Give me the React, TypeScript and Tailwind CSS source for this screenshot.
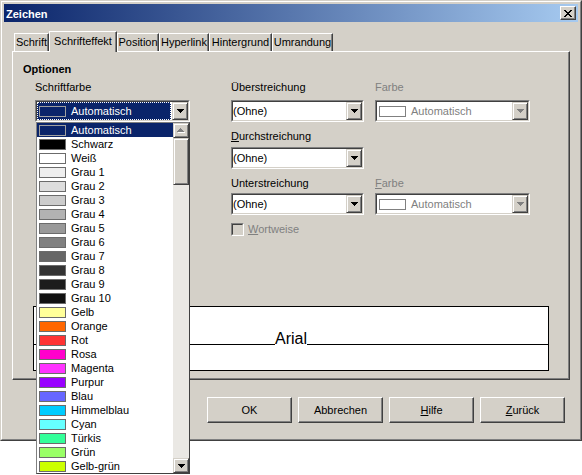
import React from "react";

const PALETTE: [string, string | null][] = [
  ["Automatisch", null],
  ["Schwarz", "#000000"],
  ["Weiß", "#ffffff"],
  ["Grau 1", "#eeeeee"],
  ["Grau 2", "#dddddd"],
  ["Grau 3", "#cccccc"],
  ["Grau 4", "#b2b2b2"],
  ["Grau 5", "#999999"],
  ["Grau 6", "#808080"],
  ["Grau 7", "#666666"],
  ["Grau 8", "#333333"],
  ["Grau 9", "#1c1c1c"],
  ["Grau 10", "#111111"],
  ["Gelb", "#ffff99"],
  ["Orange", "#ff6600"],
  ["Rot", "#ff3333"],
  ["Rosa", "#ff00cc"],
  ["Magenta", "#ff33ff"],
  ["Purpur", "#9900ff"],
  ["Blau", "#6666ff"],
  ["Himmelblau", "#00ccff"],
  ["Cyan", "#66ffff"],
  ["Türkis", "#33ff99"],
  ["Grün", "#99ff66"],
  ["Gelb-grün", "#ccff00"],
];

function ArrowDown({ color = "#000" }: { color?: string }) {
  return (
    <svg width="7" height="4" viewBox="0 0 7 4" shapeRendering="crispEdges">
      <rect x="0" y="0" width="7" height="1" fill={color} />
      <rect x="1" y="1" width="5" height="1" fill={color} />
      <rect x="2" y="2" width="3" height="1" fill={color} />
      <rect x="3" y="3" width="1" height="1" fill={color} />
    </svg>
  );
}

function ArrowUpDisabled() {
  return (
    <svg width="8" height="5" viewBox="0 0 8 5" shapeRendering="crispEdges">
      <rect x="4" y="1" width="1" height="1" fill="#fff" />
      <rect x="3" y="2" width="3" height="1" fill="#fff" />
      <rect x="2" y="3" width="5" height="1" fill="#fff" />
      <rect x="1" y="4" width="7" height="1" fill="#fff" />
      <rect x="3" y="0" width="1" height="1" fill="#808080" />
      <rect x="2" y="1" width="3" height="1" fill="#808080" />
      <rect x="1" y="2" width="5" height="1" fill="#808080" />
      <rect x="0" y="3" width="7" height="1" fill="#808080" />
    </svg>
  );
}

function CloseGlyph() {
  const px: [number, number][] = [];
  const rows = [
    "xx....xx",
    ".xx..xx.",
    "..xxxx..",
    "...xx...",
    "..xxxx..",
    ".xx..xx.",
    "xx....xx",
  ];
  rows.forEach((r, y) =>
    r.split("").forEach((c, x) => {
      if (c === "x") px.push([x, y]);
    })
  );
  return (
    <svg width="8" height="7" viewBox="0 0 8 7" shapeRendering="crispEdges">
      {px.map(([x, y]) => (
        <rect key={`${x}-${y}`} x={x} y={y} width="1" height="1" fill="#000" />
      ))}
    </svg>
  );
}

function ComboButton({ disabled }: { disabled?: boolean }) {
  return (
    <div className="w-[16px] h-full flex items-center justify-center bg-[#d4d0c8] border border-t-[#d4d0c8] border-l-[#d4d0c8] border-r-[#404040] border-b-[#404040] shadow-[inset_1px_1px_0_#ffffff,inset_-1px_-1px_0_#808080]">
      <ArrowDown color={disabled ? "#808080" : "#000"} />
    </div>
  );
}

function Combo({
  width,
  children,
  disabled,
}: {
  width: string;
  children: React.ReactNode;
  disabled?: boolean;
}) {
  return (
    <div
      className={
        "h-[22px] bg-white border border-t-[#808080] border-l-[#808080] border-b-white border-r-white " +
        width
      }
    >
      <div className="flex h-full border border-t-[#404040] border-l-[#404040] border-b-[#d4d0c8] border-r-[#d4d0c8]">
        <div className="flex-1 min-w-0 flex items-center overflow-hidden">{children}</div>
        <ComboButton disabled={disabled} />
      </div>
    </div>
  );
}

function ColorList() {
  return (
    <div className="absolute left-px top-full z-20 w-[154px] h-[352px] bg-white border border-t-[#808080] border-l-[#808080] border-r-[#404040] border-b-[#404040] flex">
      <div className="w-[136px] flex flex-col">
        {PALETTE.map(([name, color], i) => {
          const sel = i === 0;
          return (
            <div
              key={name}
              className={
                sel
                  ? "h-[14px] flex items-center pl-[2px] gap-[5px] bg-[#0a246a] text-white"
                  : "h-[14px] flex items-center pl-[2px] gap-[5px] text-black"
              }
            >
              <div
                className={
                  sel
                    ? "w-[27px] h-[11px] border border-[#a0a0a0]"
                    : "w-[27px] h-[11px] border border-[#6b6b6b]"
                }
                style={color ? { backgroundColor: color } : undefined}
              />
              <span className="leading-[14px] whitespace-nowrap">{name}</span>
            </div>
          );
        })}
      </div>
      <div className="w-[16px] h-full flex flex-col bg-[#eae8e4]">
        <div className="h-[15px] flex items-center justify-center bg-[#d4d0c8] border border-t-[#d4d0c8] border-l-[#d4d0c8] border-r-[#404040] border-b-[#404040] shadow-[inset_1px_1px_0_#ffffff,inset_-1px_-1px_0_#808080]">
          <ArrowUpDisabled />
        </div>
        <div className="h-[47px] bg-[#d4d0c8] border border-t-[#d4d0c8] border-l-[#d4d0c8] border-r-[#404040] border-b-[#404040] shadow-[inset_1px_1px_0_#ffffff,inset_-1px_-1px_0_#808080]" />
        <div className="flex-1" />
        <div className="h-[15px] flex items-center justify-center bg-[#d4d0c8] border border-t-[#d4d0c8] border-l-[#d4d0c8] border-r-[#404040] border-b-[#404040] shadow-[inset_1px_1px_0_#ffffff,inset_-1px_-1px_0_#808080]">
          <ArrowDown />
        </div>
      </div>
    </div>
  );
}

function Tab({ label, width, selected }: { label: string; width: string; selected?: boolean }) {
  return (
    <div
      className={
        selected
          ? "relative z-10 h-[21px] -mb-px bg-[#d4d0c8] border-l border-t border-r border-l-white border-t-white border-r-[#404040] shadow-[inset_-1px_0_0_#808080] flex justify-center pt-[3px] " +
            width
          : "h-[18px] bg-[#d4d0c8] border-l border-t border-r border-l-white border-t-white border-r-[#404040] shadow-[inset_-1px_0_0_#808080] flex justify-center pt-[2px] " +
            width
      }
    >
      <span className="leading-[13px] whitespace-nowrap">{label}</span>
    </div>
  );
}

function Button({ children }: { children: React.ReactNode }) {
  return (
    <div className="w-[85px] h-[26px] flex items-center justify-center border border-t-white border-l-white border-r-[#404040] border-b-[#404040] shadow-[inset_-1px_-1px_0_#808080]">
      <span className="leading-[13px]">{children}</span>
    </div>
  );
}

function DisabledColor() {
  return (
    <div className="flex items-center pl-[2px] gap-[5px]">
      <div className="w-[27px] h-[11px] border border-[#808080] bg-white" />
      <span className="text-[#808080] whitespace-nowrap">Automatisch</span>
    </div>
  );
}

export default function App() {
  return (
    <div className="w-[582px] h-[475px] bg-white relative overflow-hidden font-['Liberation_Sans',Arial,sans-serif] text-[11px] leading-[13px] text-black">
      <div className="w-[582px] h-[441px] bg-[#d4d0c8] border border-t-[#d4d0c8] border-l-[#d4d0c8] border-r-[#404040] border-b-[#404040]">
        <div className="h-full border border-t-white border-l-white border-r-[#808080] border-b-[#808080] p-[2px] flex flex-col">
          {/* Title bar */}
          <div className="h-[18px] flex items-center justify-between pl-[2px] pr-[2px] bg-[linear-gradient(to_right,#0a246a,#a6caf0)]">
            <span className="text-white font-bold leading-[18px] h-[18px] pt-px">Zeichen</span>
            <div className="w-[16px] h-[14px] flex items-center justify-center bg-[#d4d0c8] border border-t-white border-l-white border-r-[#404040] border-b-[#404040] shadow-[inset_-1px_-1px_0_#808080]">
              <CloseGlyph />
            </div>
          </div>

          {/* Tabs */}
          <div className="mt-[9px] ml-[10px] h-[20px] flex items-end">
            <Tab label="Schrift" width="w-[35px]" />
            <Tab label="Schrifteffekt" width="w-[68px]" selected />
            <Tab label="Position" width="w-[42px]" />
            <Tab label="Hyperlink" width="w-[50px]" />
            <Tab label="Hintergrund" width="w-[63px]" />
            <Tab label="Umrandung" width="w-[61px]" />
          </div>

          {/* Panel */}
          <div className="ml-[8px] w-[558px] h-[329px] border border-t-white border-l-white border-r-[#404040] border-b-[#404040] shadow-[inset_-1px_-1px_0_#808080] pt-[11px] pl-[10px]">
            <div className="font-bold h-[13px]">Optionen</div>

            <div className="ml-[12px] mt-[5px] flex">
              {/* Column 1 */}
              <div className="w-[196px] flex flex-col">
                <div className="h-[13px]">Schriftfarbe</div>
                <div className="relative mt-[6px] w-[155px]">
                  <div className="h-[22px] w-[155px] bg-white border border-t-[#808080] border-l-[#808080] border-b-white border-r-white">
                    <div className="flex h-full border border-t-[#404040] border-l-[#404040] border-b-[#d4d0c8] border-r-[#d4d0c8]">
                      <div className="flex-1 mr-px flex items-center pl-px gap-[5px] bg-[#0a246a] border border-dotted border-white text-white">
                        <div className="w-[27px] h-[11px] border border-[#a0a0a0]" />
                        <span className="whitespace-nowrap">Automatisch</span>
                      </div>
                      <ComboButton />
                    </div>
                  </div>
                  <ColorList />
                </div>
              </div>

              {/* Column 2 */}
              <div className="w-[144px] flex flex-col">
                <div className="h-[13px]">Überstreichung</div>
                <div className="mt-[6px]">
                  <Combo width="w-[133px]">
                    <span className="whitespace-nowrap">(Ohne)</span>
                  </Combo>
                </div>
                <div className="h-[13px] mt-[8px]">
                  <span className="underline">D</span>urchstreichung
                </div>
                <div className="mt-[4px]">
                  <Combo width="w-[133px]">
                    <span className="whitespace-nowrap">(Ohne)</span>
                  </Combo>
                </div>
                <div className="h-[13px] mt-[8px]">Unterstreichung</div>
                <div className="mt-[3px]">
                  <Combo width="w-[133px]">
                    <span className="whitespace-nowrap">(Ohne)</span>
                  </Combo>
                </div>
                <div className="mt-[8px] h-[13px] flex items-center gap-[4px]">
                  <div className="w-[13px] h-[13px] border border-t-[#808080] border-l-[#808080] border-b-white border-r-white">
                    <div className="w-full h-full bg-[#d4d0c8] border border-t-[#404040] border-l-[#404040] border-b-[#d4d0c8] border-r-[#d4d0c8]" />
                  </div>
                  <span className="text-[#808080]">
                    <span className="underline">W</span>ortweise
                  </span>
                </div>
              </div>

              {/* Column 3 */}
              <div className="w-[155px] flex flex-col">
                <div className="h-[13px] text-[#808080]">Farbe</div>
                <div className="mt-[6px]">
                  <Combo width="w-[155px]" disabled>
                    <DisabledColor />
                  </Combo>
                </div>
                <div className="h-[13px] mt-[55px] text-[#808080]">
                  <span className="underline">F</span>arbe
                </div>
                <div className="mt-[3px]">
                  <Combo width="w-[155px]" disabled>
                    <DisabledColor />
                  </Combo>
                </div>
              </div>
            </div>

            {/* Preview */}
            <div className="mt-[70px] ml-[10px] w-[516px] h-[65px] bg-white border border-black">
              <div className="h-[40px] flex items-end">
                <div className="flex-1 h-px bg-black mb-[2px]" />
                <span className="text-[16px] leading-[16px]">Arial</span>
                <div className="flex-1 h-px bg-black mb-[2px]" />
              </div>
            </div>
          </div>

          {/* Buttons */}
          <div className="mt-[17px] pr-[13px] flex justify-end gap-[6px]">
            <Button>OK</Button>
            <Button>Abbrechen</Button>
            <Button>
              <span className="underline">H</span>ilfe
            </Button>
            <Button>
              <span className="underline">Z</span>urück
            </Button>
          </div>
        </div>
      </div>
    </div>
  );
}
